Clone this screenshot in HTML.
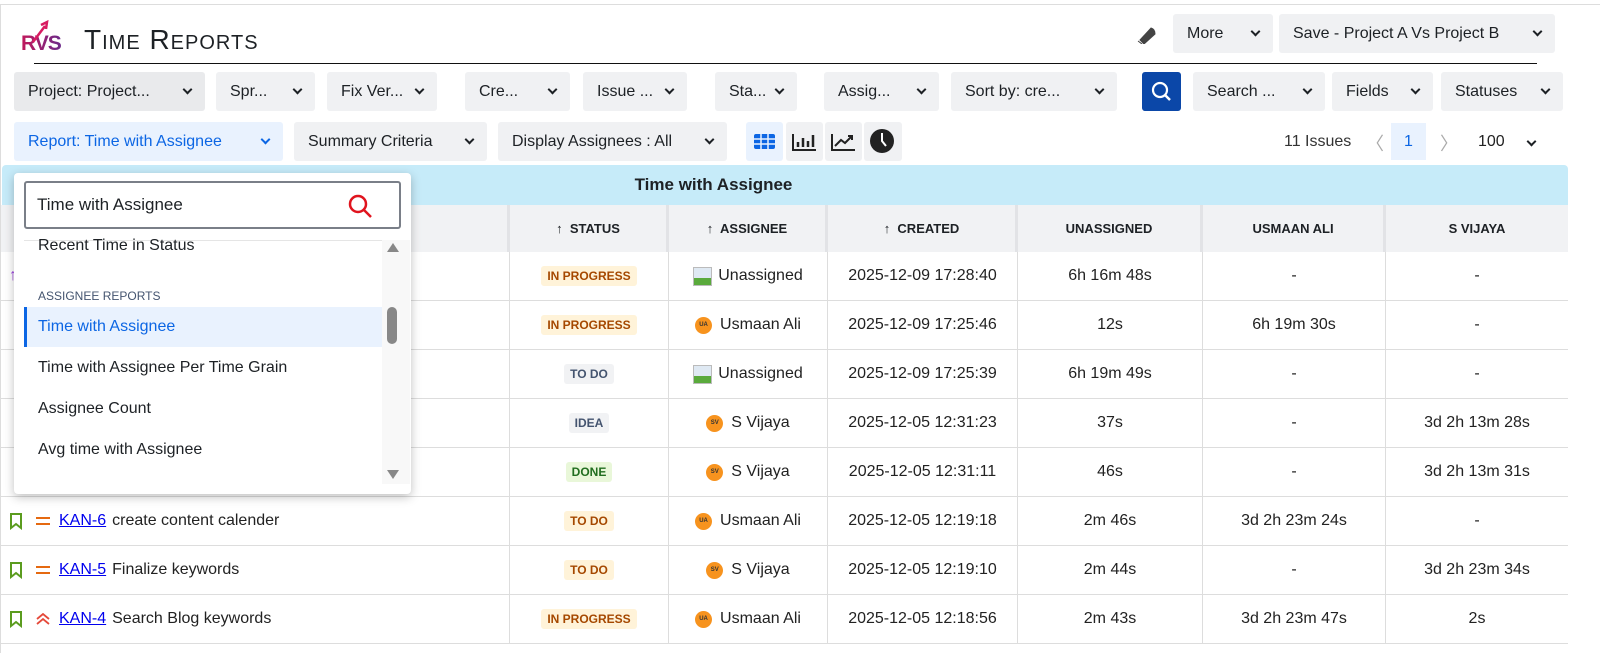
<!DOCTYPE html>
<html><head><meta charset="utf-8"><style>
*{box-sizing:border-box;margin:0;padding:0}
body{width:1600px;height:653px;background:#fff;font-family:"Liberation Sans",Arial,sans-serif;position:relative;overflow:hidden;color:#172b4d}
.a{position:absolute}
.btn{position:absolute;background:#f0f1f3;border-radius:3px;font-size:16px;color:#1d2125;display:flex;align-items:center;justify-content:space-between;padding:0 14px 0 14px;height:39px;white-space:nowrap;overflow:hidden}
.chev{display:inline-block;flex:none;width:7px;height:7px;border-right:2px solid #1d2125;border-bottom:2px solid #1d2125;transform:rotate(45deg);margin-top:-4px;margin-left:8px}
.hd{position:absolute;top:205px;height:47px;background:#f1f2f4;font-size:13px;font-weight:bold;color:#1d2125;display:flex;align-items:center;justify-content:center;border-right:3px solid #e2e3e6}
.row{position:absolute;left:1px;width:1567px;height:49px;border-bottom:1px solid #ddd}
.c{position:absolute;top:0;height:48px;display:flex;align-items:center;justify-content:center;font-size:16px;color:#222;border-right:1px solid #ddd;white-space:nowrap}
.lz{font-size:12px;font-weight:bold;padding:3px 6px;border-radius:3px}
.ip{background:#fff3d9;color:#a54800}
.td{background:#f1f2f4;color:#44546f}
.dn{background:#e9f7d9;color:#216e1f}
.av{width:17px;height:17px;border-radius:50%;background:#f7931e;color:#333;font-size:6px;font-weight:bold;display:inline-flex;align-items:center;justify-content:center;margin-right:8px}
.ph{display:inline-block;width:19px;height:19px;border:1px solid #bbb;background:linear-gradient(#dfe9f3 60%,#5aaa3c 60%);margin-right:6px}
.it{position:absolute;left:24px;width:358px;font-size:16px;color:#1d2125;padding-left:14px;height:40px;display:flex;align-items:center}
.s{left:0;width:509px;justify-content:flex-start;padding-left:8px}
.k{color:#0000ee;text-decoration:underline;margin-right:6px}
</style></head><body>
<div class="a" style="left:0;top:4px;width:1600px;height:1px;background:#ddd"></div>
<div class="a" style="left:0;top:4px;width:1px;height:649px;background:#ddd"></div>
<svg class="a" style="left:20px;top:14px" width="42" height="40" viewBox="0 0 42 40">
<defs><linearGradient id="g" x1="0" x2="1"><stop offset="0" stop-color="#c2185b"/><stop offset="1" stop-color="#6a2a8a"/></linearGradient></defs>
<text x="1" y="36" font-family="Liberation Sans" font-weight="bold" font-size="21" letter-spacing="-1" fill="url(#g)">RVS</text>
<path d="M13 28 L25 12 M21 11 L27 8 L26 15" stroke="#d81b60" stroke-width="2.5" fill="none"/>
</svg>
<div class="a" style="left:84px;top:24px;font-size:28px;font-variant:small-caps;letter-spacing:1px;color:#1d2125">Time Reports</div>
<div class="a" style="left:34px;top:63px;width:1503px;height:1px;background:#111"></div>
<svg class="a" style="left:1136px;top:24px" width="22" height="20" viewBox="0 0 22 20"><path d="M4 16 L15 4 Q19 5 19 10 L8 20 Z M2 17 L6 20" fill="#444" stroke="#444"/></svg>
<div class="btn" style="left:1173px;top:14px;width:100px">More<span class="chev"></span></div>
<div class="btn" style="left:1279px;top:14px;width:276px">Save - Project A Vs Project B<span class="chev"></span></div>
<div class="btn" style="left:14px;top:72px;width:191px;background:#e9eaec">Project: Project...<span class="chev"></span></div>
<div class="btn" style="left:216px;top:72px;width:99px">Spr...<span class="chev"></span></div>
<div class="btn" style="left:327px;top:72px;width:110px">Fix Ver...<span class="chev"></span></div>
<div class="btn" style="left:465px;top:72px;width:105px">Cre...<span class="chev"></span></div>
<div class="btn" style="left:583px;top:72px;width:104px">Issue ...<span class="chev"></span></div>
<div class="btn" style="left:715px;top:72px;width:82px">Sta...<span class="chev"></span></div>
<div class="btn" style="left:824px;top:72px;width:115px">Assig...<span class="chev"></span></div>
<div class="btn" style="left:951px;top:72px;width:166px">Sort by: cre...<span class="chev"></span></div>
<div class="a" style="left:1142px;top:72px;width:39px;height:39px;background:#0b47a8;border-radius:3px"><svg width="39" height="39"><circle cx="18" cy="18" r="7" stroke="#fff" stroke-width="2.2" fill="none"/><path d="M23 23 L28 28" stroke="#fff" stroke-width="2.5"/></svg></div>
<div class="btn" style="left:1193px;top:72px;width:132px">Search ...<span class="chev"></span></div>
<div class="btn" style="left:1332px;top:72px;width:101px">Fields<span class="chev"></span></div>
<div class="btn" style="left:1441px;top:72px;width:122px">Statuses<span class="chev"></span></div>
<div class="btn" style="left:14px;top:122px;width:269px;background:#e9f2fe;color:#0c66e4">Report: Time with Assignee<span class="chev" style="border-color:#0c66e4"></span></div>
<div class="btn" style="left:294px;top:122px;width:193px">Summary Criteria<span class="chev"></span></div>
<div class="btn" style="left:498px;top:122px;width:229px">Display Assignees : All<span class="chev"></span></div>
<div class="a" style="left:746px;top:122px;width:37px;height:39px;background:#e9f2fe;border-radius:3px"><svg width="37" height="39"><rect x="8" y="12" width="21" height="15" rx="2" fill="#0c66e4"/><path d="M8 17H29M8 22H29M15 12V27M22 12V27" stroke="#e9f2fe" stroke-width="1.5"/></svg></div>
<div class="a" style="left:786px;top:122px;width:37px;height:39px;background:#f0f1f3;border-radius:3px"><svg width="37" height="39"><path d="M7 12V28H30" stroke="#222" stroke-width="2" fill="none"/><path d="M12 25V20M17 25V16M22 25V19M27 25V13" stroke="#222" stroke-width="2.5"/></svg></div>
<div class="a" style="left:825px;top:122px;width:37px;height:39px;background:#f0f1f3;border-radius:3px"><svg width="37" height="39"><path d="M7 12V28H30" stroke="#222" stroke-width="2" fill="none"/><path d="M10 24L16 18L20 21L27 14M23 14H27V18" stroke="#222" stroke-width="2" fill="none"/></svg></div>
<div class="a" style="left:864px;top:122px;width:38px;height:39px;background:#f0f1f3;border-radius:3px"><svg width="38" height="39"><circle cx="18" cy="19" r="12" fill="#222"/><path d="M18 11V19L22 24" stroke="#fff" stroke-width="2" fill="none"/></svg></div>
<div class="a" style="left:1284px;top:133px;font-size:16px;color:#333">11 Issues</div>
<div class="a" style="left:1366px;top:130px;font-size:18px;color:#aaa">〈</div>
<div class="a" style="left:1391px;top:123px;width:35px;height:37px;background:#e9f2fe;color:#0c66e4;font-size:16px;display:flex;align-items:center;justify-content:center">1</div>
<div class="a" style="left:1440px;top:130px;font-size:18px;color:#aaa">〉</div>
<div class="a" style="left:1478px;top:133px;font-size:16px;color:#222">100</div>
<span class="chev a" style="left:1528px;top:138px;margin:0"></span>
<div class="a" style="left:2px;top:165px;width:1566px;height:40px;background:#c6ebf9;border-radius:4px 4px 0 0;font-size:17px;font-weight:bold;color:#1d2125;display:flex;align-items:center;justify-content:center;padding-right:143px">Time with Assignee</div>
<div class="hd" style="left:1px;width:509px"></div>
<div class="hd" style="left:510px;width:159px">↑&nbsp; STATUS</div>
<div class="hd" style="left:669px;width:159px">↑&nbsp; ASSIGNEE</div>
<div class="hd" style="left:828px;width:190px">↑&nbsp; CREATED</div>
<div class="hd" style="left:1018px;width:185px">UNASSIGNED</div>
<div class="hd" style="left:1203px;width:183px">USMAAN ALI</div>
<div class="hd" style="left:1386px;width:182px;border-right:none">S VIJAYA</div>

<div class="row" style="top:252px"><div class="c s"><span style="color:#a04be0">↑</span></div><div class="c" style="left:509px;width:159px"><span class="lz ip">IN PROGRESS</span></div><div class="c" style="left:668px;width:159px"><span class="ph"></span>Unassigned</div><div class="c" style="left:827px;width:190px">2025-12-09 17:28:40</div><div class="c" style="left:1017px;width:185px">6h 16m 48s</div><div class="c" style="left:1202px;width:183px">-</div><div class="c" style="left:1385px;width:182px;border:none">-</div></div>
<div class="row" style="top:301px"><div class="c s"></div><div class="c" style="left:509px;width:159px"><span class="lz ip">IN PROGRESS</span></div><div class="c" style="left:668px;width:159px"><span class="av">UA</span>Usmaan Ali</div><div class="c" style="left:827px;width:190px">2025-12-09 17:25:46</div><div class="c" style="left:1017px;width:185px">12s</div><div class="c" style="left:1202px;width:183px">6h 19m 30s</div><div class="c" style="left:1385px;width:182px;border:none">-</div></div>
<div class="row" style="top:350px"><div class="c s"></div><div class="c" style="left:509px;width:159px"><span class="lz td">TO DO</span></div><div class="c" style="left:668px;width:159px"><span class="ph"></span>Unassigned</div><div class="c" style="left:827px;width:190px">2025-12-09 17:25:39</div><div class="c" style="left:1017px;width:185px">6h 19m 49s</div><div class="c" style="left:1202px;width:183px">-</div><div class="c" style="left:1385px;width:182px;border:none">-</div></div>
<div class="row" style="top:399px"><div class="c s"></div><div class="c" style="left:509px;width:159px"><span class="lz td">IDEA</span></div><div class="c" style="left:668px;width:159px"><span class="av">SV</span>S Vijaya</div><div class="c" style="left:827px;width:190px">2025-12-05 12:31:23</div><div class="c" style="left:1017px;width:185px">37s</div><div class="c" style="left:1202px;width:183px">-</div><div class="c" style="left:1385px;width:182px;border:none">3d 2h 13m 28s</div></div>
<div class="row" style="top:448px"><div class="c s"></div><div class="c" style="left:509px;width:159px"><span class="lz dn">DONE</span></div><div class="c" style="left:668px;width:159px"><span class="av">SV</span>S Vijaya</div><div class="c" style="left:827px;width:190px">2025-12-05 12:31:11</div><div class="c" style="left:1017px;width:185px">46s</div><div class="c" style="left:1202px;width:183px">-</div><div class="c" style="left:1385px;width:182px;border:none">3d 2h 13m 31s</div></div>
<div class="row" style="top:497px"><div class="c s"><svg width="14" height="18" style="margin-right:12px"><path d="M2 2H12V16L7 12L2 16Z" stroke="#5b9c1f" stroke-width="2" fill="none"/></svg><svg width="16" height="12" style="margin-right:8px"><path d="M1 3H15M1 9H15" stroke="#e56910" stroke-width="2"/></svg><span class="k">KAN-6</span>create content calender</div><div class="c" style="left:509px;width:159px"><span class="lz ip">TO DO</span></div><div class="c" style="left:668px;width:159px"><span class="av">UA</span>Usmaan Ali</div><div class="c" style="left:827px;width:190px">2025-12-05 12:19:18</div><div class="c" style="left:1017px;width:185px">2m 46s</div><div class="c" style="left:1202px;width:183px">3d 2h 23m 24s</div><div class="c" style="left:1385px;width:182px;border:none">-</div></div>
<div class="row" style="top:546px"><div class="c s"><svg width="14" height="18" style="margin-right:12px"><path d="M2 2H12V16L7 12L2 16Z" stroke="#5b9c1f" stroke-width="2" fill="none"/></svg><svg width="16" height="12" style="margin-right:8px"><path d="M1 3H15M1 9H15" stroke="#e56910" stroke-width="2"/></svg><span class="k">KAN-5</span>Finalize keywords</div><div class="c" style="left:509px;width:159px"><span class="lz ip">TO DO</span></div><div class="c" style="left:668px;width:159px"><span class="av">SV</span>S Vijaya</div><div class="c" style="left:827px;width:190px">2025-12-05 12:19:10</div><div class="c" style="left:1017px;width:185px">2m 44s</div><div class="c" style="left:1202px;width:183px">-</div><div class="c" style="left:1385px;width:182px;border:none">3d 2h 23m 34s</div></div>
<div class="row" style="top:595px"><div class="c s"><svg width="14" height="18" style="margin-right:12px"><path d="M2 2H12V16L7 12L2 16Z" stroke="#5b9c1f" stroke-width="2" fill="none"/></svg><svg width="16" height="12" style="margin-right:8px"><path d="M2 6L8 1L14 6M2 11L8 6L14 11" stroke="#e5493a" stroke-width="1.8" fill="none"/></svg><span class="k">KAN-4</span>Search Blog keywords</div><div class="c" style="left:509px;width:159px"><span class="lz ip">IN PROGRESS</span></div><div class="c" style="left:668px;width:159px"><span class="av">UA</span>Usmaan Ali</div><div class="c" style="left:827px;width:190px">2025-12-05 12:18:56</div><div class="c" style="left:1017px;width:185px">2m 43s</div><div class="c" style="left:1202px;width:183px">3d 2h 23m 47s</div><div class="c" style="left:1385px;width:182px;border:none">2s</div></div>

<div class="a" style="left:14px;top:173px;width:397px;height:321px;background:#fff;border-radius:4px;box-shadow:0 3px 10px rgba(0,0,0,.25)"></div>
<div class="a" style="left:24px;top:181px;width:377px;height:48px;border:2px solid #7a7f88;border-radius:3px;font-size:17px;color:#1d2125;display:flex;align-items:center;padding-left:11px">Time with Assignee</div>
<svg class="a" style="left:346px;top:192px" width="28" height="28"><circle cx="12" cy="12" r="8" stroke="#e0141e" stroke-width="2.5" fill="none"/><path d="M18 18L25 25" stroke="#e0141e" stroke-width="2.5"/></svg>
<div class="a" style="left:24px;top:240px;width:358px;height:1px;background:#e5e5e5"></div>
<div class="a" style="left:382px;top:240px;width:28px;height:244px;background:#f8f8f8"></div>
<div class="a" style="left:387px;top:243px;width:0;height:0;border-left:6px solid transparent;border-right:6px solid transparent;border-bottom:9px solid #888"></div>
<div class="a" style="left:387px;top:470px;width:0;height:0;border-left:6px solid transparent;border-right:6px solid transparent;border-top:9px solid #888"></div>
<div class="a" style="left:387px;top:307px;width:10px;height:37px;background:#888;border-radius:5px"></div>
<div class="a" style="left:38px;top:237px;font-size:16px;color:#1d2125">Recent Time in Status</div>
<div class="a" style="left:38px;top:289px;font-size:12px;color:#44546f">ASSIGNEE REPORTS</div>
<div class="it" style="top:307px;background:#e9f2fe;color:#0c66e4;border-left:3px solid #0c66e4;padding-left:11px">Time with Assignee</div>
<div class="it" style="top:348px">Time with Assignee Per Time Grain</div>
<div class="it" style="top:389px">Assignee Count</div>
<div class="it" style="top:430px">Avg time with Assignee</div>
</body></html>
